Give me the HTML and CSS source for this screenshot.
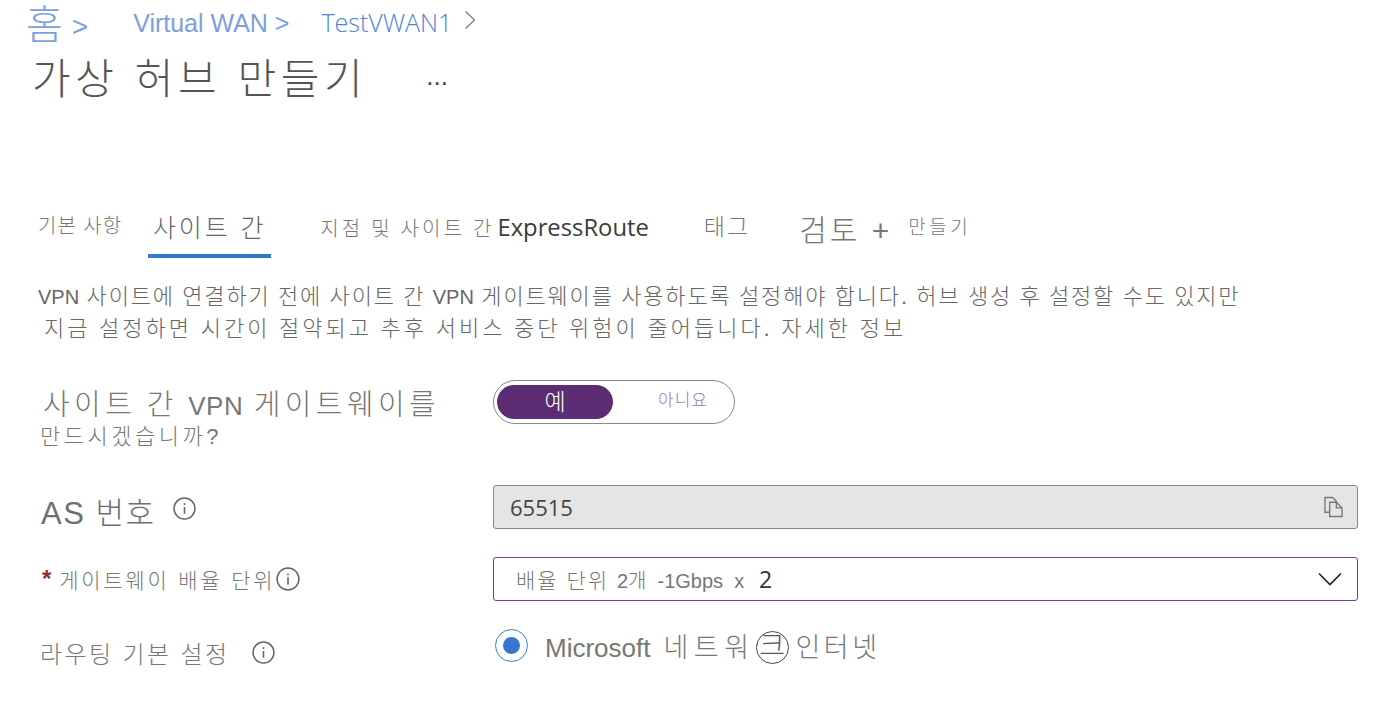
FILE: index.html
```html
<html>
<head>
<meta charset="utf-8" />
<link rel="stylesheet" href="styles.css">
</head>

<body>
    <nav class="crumbs">
        <a class="crumb-home">홈</a>
        <a class="crumb-home-sep">&gt;</a>
        <a class="crumb-wan">Virtual WAN &gt;</a>
        <a class="crumb-test">TestVWAN1</a>
        <svg class="crumb-chevron" width="12" height="20" viewBox="0 0 12 20"><path d="M1.5 1.5 L10.5 10 L1.5 18.5" fill="none" stroke="#777" stroke-width="1.2"/></svg>
    </nav>

    <div class="title-row">
        <h1>가상 허브 만들기</h1>
        <span class="more">...</span>
    </div>

    <div class="tabs">
        <span class="tab tab-basic">기본 사항</span>
        <span class="tab tab-active">사이트 간</span>
        <span class="tab tab-p2s">지점 및 사이트 간 <b>ExpressRoute</b></span>
        <span class="tab tab-tags">태그</span>
        <span class="tab tab-review">검토 + </span>
        <span class="tab tab-create">만들기</span>
    </div>

    <p class="desc desc-first"><b>VPN</b> 사이트에 연결하기 전에 사이트 간 <b>VPN</b> 게이트웨이를 사용하도록 설정해야 합니다. 허브 생성 후 설정할 수도 있지만</p>
    <p class="desc desc-second">지금 설정하면 시간이 절약되고 추후 서비스 중단 위험이 줄어듭니다. 자세한 정보</p>

    <div class="form">
        <div class="label label-vpn">
            <div class="vpn-big">사이트 간 <span class="vpn-latin">VPN</span> 게이트웨이를</div>
            <div class="vpn-small">만드시겠습니까?</div>
        </div>
        <div class="field">
            <div class="toggle">
                <span class="toggle-on">예</span>
                <span class="toggle-off">아니요</span>
            </div>
        </div>

        <div class="label label-as">
            <span>AS 번호</span>
            <svg class="info info-as" width="23" height="23" viewBox="0 0 22 22"><circle cx="11" cy="11" r="10" fill="none" stroke="#666" stroke-width="1.4"/><path d="M11 9.5 V16 M11 6 V7.6" stroke="#666" stroke-width="1.5"/></svg>
        </div>
        <div class="field">
            <div class="input input-readonly">
                <span>65515</span>
                <svg width="19" height="22" viewBox="0 0 20 22"><path d="M6 16.5 H1 V1 H9 L13 5 V6" fill="none" stroke="#777" stroke-width="1.4"/><path d="M6 6 H13 L19 12 V21 H6 Z M13 6 V12 H19" fill="none" stroke="#777" stroke-width="1.4"/></svg>
            </div>
        </div>

        <div class="label label-scale">
            <span class="star">*</span>
            <span>게이트웨이 배율 단위</span>
            <svg class="info" width="24" height="24" viewBox="0 0 22 22"><circle cx="11" cy="11" r="10" fill="none" stroke="#666" stroke-width="1.4"/><path d="M11 9.5 V16 M11 6 V7.6" stroke="#666" stroke-width="1.5"/></svg>
        </div>
        <div class="field">
            <div class="input input-select">
                <span class="select-text">배율 단위 <span class="select-latin">2개 -1Gbps x</span> <span class="select-num">2</span></span>
                <svg width="24" height="14" viewBox="0 0 24 14"><path d="M1 1.5 L12 12.5 L23 1.5" fill="none" stroke="#222" stroke-width="1.6"/></svg>
            </div>
        </div>

        <div class="label label-route">
            <span>라우팅 기본 설정</span>
            <svg class="info info-route" width="23" height="23" viewBox="0 0 22 22"><circle cx="11" cy="11" r="10" fill="none" stroke="#666" stroke-width="1.4"/><path d="M11 9.5 V16 M11 6 V7.6" stroke="#666" stroke-width="1.5"/></svg>
        </div>
        <div class="field radio-row">
            <span class="radio"><span class="radio-dot"></span></span>
            <span class="radio-text"><span class="radio-latin">Microsoft</span> <span class="radio-net">네트워</span><span class="circled">크</span>인터넷</span>
        </div>
    </div>
</body>
</html>
```

FILE: styles.css
```css
body {
    margin: 0px;
    background: #fff;
    color: #777;
    font-family: "Liberation Sans", "Noto Sans CJK KR", sans-serif;
    font-weight: 300;
    overflow: hidden;
}

.crumbs {
    display: flex;
    align-items: center;
    height: 46px;
    padding-left: 26px;
    color: #7ba0dc;
}
.crumb-home {
    font-size: 40px;
    line-height: 46px;
    margin-top: 4px;
}
.crumb-home-sep {
    font-size: 28px;
    margin-left: 9px;
    margin-top: 8px;
}
.crumb-wan {
    font-size: 25px;
    margin-left: 45px;
}
.crumb-test {
    font-family: "Open Sans", sans-serif;
    font-size: 25px;
    color: #4a86d8;
    margin-left: 32px;
    margin-top: -2px;
}
.crumb-chevron {
    margin-left: 12px;
    margin-bottom: 6px;
}

.title-row {
    display: flex;
    align-items: center;
    height: 62px;
    padding-left: 32px;
}
h1 {
    margin: 6px 0px 0px 0px;
    font-size: 42px;
    font-weight: 300;
    color: #555;
    letter-spacing: 4.6px;
    line-height: 62px;
}
.more {
    margin-left: 59px;
    font-size: 26px;
    color: #444;
    margin-bottom: 2px;
}

.tabs {
    display: flex;
    align-items: center;
    margin-top: 103px;
    height: 45px;
    padding-left: 38px;
    white-space: nowrap;
}
.tab-basic {
    font-size: 20px;
    letter-spacing: 1px;
    margin-top: -18px;
}
.tab-active {
    font-size: 25px;
    letter-spacing: 2.9px;
    color: #666;
    margin-left: 26px;
    width: 123px;
    height: 45px;
    line-height: 31px;
    box-sizing: border-box;
    text-align: center;
    border-bottom: 4px solid #3578cd;
    margin-top: 3px;
}
.tab-p2s {
    font-size: 20px;
    letter-spacing: 3.2px;
    word-spacing: -1px;
    margin-left: 49px;
    margin-top: -14px;
}
.tab-p2s b {
    font-family: "Open Sans", sans-serif;
    font-size: 23.8px;
    font-weight: 400;
    letter-spacing: 0px;
    color: #3b3b3b;
    margin-left: -5px;
}
.tab-tags {
    font-size: 23px;
    letter-spacing: 2px;
    margin-left: 55px;
    margin-top: -17px;
}
.tab-review {
    font-size: 30px;
    letter-spacing: 3px;
    margin-left: 49px;
    margin-top: -12px;
}
.tab-create {
    font-size: 19px;
    letter-spacing: 3.5px;
    margin-left: 16px;
    margin-top: -16px;
}

.desc {
    margin: 0px;
    font-size: 22px;
    line-height: 32px;
    color: #666;
    white-space: nowrap;
}
.desc b {
    font-weight: 400;
    font-size: 20px;
    letter-spacing: 0px;
}
.desc-first {
    margin-top: 25px;
    padding-left: 38px;
    letter-spacing: 1.83px;
    word-spacing: -0.5px;
}
.desc-second {
    padding-left: 44px;
    letter-spacing: 3px;
    word-spacing: -0.5px;
}

.form {
    display: grid;
    grid-template-columns: 493px 865px;
    grid-template-rows: 105px 72px 69px 60px;
    margin-top: 35px;
}
.label {
    color: #777;
}
.label-vpn {
    padding-left: 43px;
    padding-top: 5px;
}
.vpn-big {
    font-size: 29px;
    letter-spacing: 4.4px;
    word-spacing: -2px;
    line-height: 41px;
    white-space: nowrap;
}
.vpn-latin {
    font-size: 26px;
    letter-spacing: 0.5px;
}
.vpn-small {
    font-size: 22px;
    letter-spacing: 3.5px;
    margin-left: -3px;
    line-height: 20px;
}
.label-as {
    display: flex;
    align-items: center;
    align-self: start;
    height: 50px;
    padding-left: 41px;
    font-size: 31px;
    letter-spacing: 1.5px;
    color: #6f6f6f;
}
.info-as {
    margin-left: 17px;
    margin-bottom: 4px;
}
.label-scale {
    display: flex;
    align-items: center;
    align-self: start;
    height: 44px;
    padding-left: 42px;
    font-size: 21px;
    letter-spacing: 2.8px;
}
.star {
    color: #8c3030;
    font-weight: 700;
    margin-right: 5px;
    font-size: 24px;
}
.label-route {
    display: flex;
    align-items: center;
    align-self: start;
    height: 52px;
    padding-left: 40px;
    font-size: 24px;
    letter-spacing: 2.4px;
}
.info-route {
    margin-left: 22px;
}

.toggle {
    display: flex;
    align-items: center;
    box-sizing: border-box;
    width: 242px;
    height: 44px;
    border: 1px solid #8a8a8a;
    border-radius: 22px;
    padding-left: 3px;
}
.toggle-on {
    flex: none;
    width: 116px;
    height: 34px;
    border-radius: 17px;
    background: #5c2d72;
    color: #fff;
    text-align: center;
    font-size: 23px;
    line-height: 34px;
}
.toggle-off {
    flex: none;
    box-sizing: border-box;
    width: 116px;
    padding-left: 24px;
    text-align: center;
    font-size: 17px;
    letter-spacing: 1px;
    color: #9b74ad;
    margin-bottom: 8px;
}

.input {
    display: flex;
    align-items: center;
    justify-content: space-between;
    box-sizing: border-box;
    height: 44px;
    border-radius: 3px;
}
.input-readonly {
    background: #e5e5e5;
    border: 1px solid #888;
    padding: 0px 14px 0px 16px;
    font-family: "Open Sans", sans-serif;
    font-weight: 400;
    font-size: 22px;
    color: #444;
}
.input-select {
    border: 1px solid #7b3fa0;
    padding: 0px 15px 0px 22px;
}
.select-text {
    font-size: 21px;
    letter-spacing: 2px;
    color: #777;
}
.select-latin {
    font-size: 20px;
    letter-spacing: 0px;
    word-spacing: 5.5px;
}
.select-num {
    font-family: "Open Sans", sans-serif;
    font-weight: 400;
    font-size: 23px;
    letter-spacing: 0px;
    color: #333;
    margin-left: 7px;
}

.radio-row {
    display: flex;
    align-items: center;
    align-self: start;
    padding-left: 2px;
    height: 38px;
}
.radio {
    display: flex;
    align-items: center;
    justify-content: center;
    box-sizing: border-box;
    width: 33px;
    height: 33px;
    border: 1px solid #3b7fd6;
    border-radius: 50%;
}
.radio-dot {
    width: 17px;
    height: 17px;
    border-radius: 50%;
    background: #3578cd;
}
.radio-text {
    margin-left: 17px;
    font-size: 27px;
    letter-spacing: 3.5px;
    color: #777;
    white-space: nowrap;
}
.radio-latin {
    font-size: 26px;
    letter-spacing: 0px;
    margin-right: 2px;
}
.radio-net {
    letter-spacing: 5.5px;
}
.circled {
    display: inline-block;
    vertical-align: 1px;
    width: 33px;
    height: 33px;
    line-height: 30px;
    border: 1px solid #444;
    border-radius: 50%;
    text-align: center;
    box-sizing: border-box;
    font-size: 28px;
    color: #555;
    letter-spacing: 0px;
    margin: 0px 7px 0px 1px;
}
```
